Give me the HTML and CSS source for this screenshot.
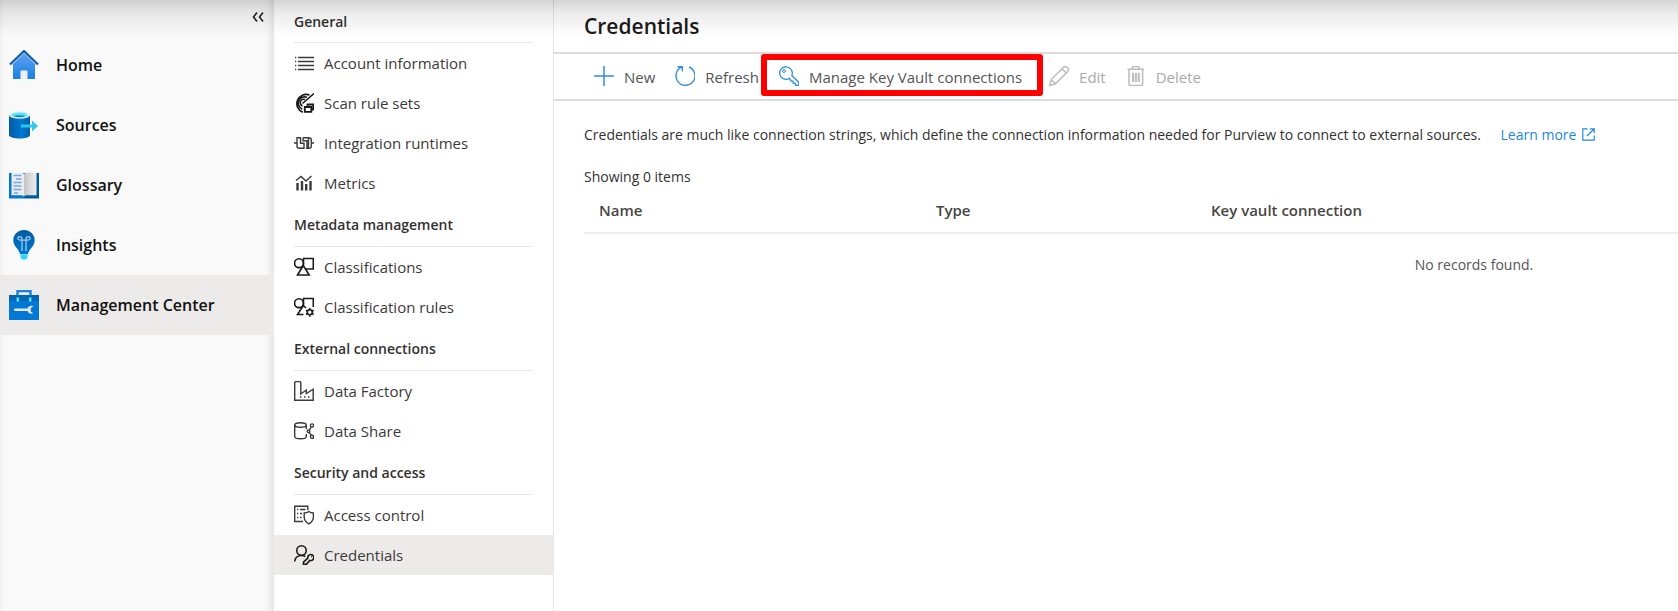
FILE: index.html
```html
<!DOCTYPE html>
<html lang="en">
<head>
    <meta charset="UTF-8">
    <meta name="viewport" content="width=device-width, initial-scale=1.0">
    <title>Credentials</title>
    <link rel="stylesheet" href="styles.css">
</head>
<body>
    <div class="app">
        <nav class="main-nav">
            <div class="collapse-row">
                <button class="collapse" type="button" aria-label="Collapse">
                    <svg width="14" height="12" viewBox="0 0 14 12" fill="none" stroke="#222" stroke-width="1.6"><path d="M6 1.500 2.500 6 6 10.500M12 1.500 8.500 6l3.500 4.500"/></svg>
                </button>
            </div>
            <a class="main-link" href="#">
                <svg class="main-icon" viewBox="0 0 30 30">
                    <defs><linearGradient id="blue" x1="0" y1="0" x2="0" y2="1"><stop offset="0" stop-color="#5ea0ef"/><stop offset="1" stop-color="#1a80e4"/></linearGradient></defs>
                    <path d="M4 14 15 3l11 11v15H4z" fill="url(#blue)"/>
                    <path d="M11.500 20.500h7V29h-7z" fill="#efefef"/>
                    <path d="M1 14.500 15 1l14 13.500" fill="none" stroke="#0a5ca8" stroke-width="2.200"/>
                </svg>
                Home
            </a>
            <a class="main-link" href="#">
                <svg class="main-icon" viewBox="0 0 30 30">
                    <defs><linearGradient id="drum" x1="0" y1="0" x2="1" y2="0"><stop offset="0" stop-color="#005ba1"/><stop offset=".6" stop-color="#0078d4"/><stop offset="1" stop-color="#005fa8"/></linearGradient></defs>
                    <path d="M0 5v20c0 2 5 3.500 10.500 3.500S21 27 21 25V5z" fill="url(#drum)"/>
                    <ellipse cx="10.500" cy="5" rx="10.500" ry="3.800" fill="#e4eef4"/>
                    <ellipse cx="10.500" cy="5" rx="8" ry="2.500" fill="#50e6ff"/>
                    <path d="M5 6.300c2-1.300 9-1.300 11 0-2 1.200-9 1.200-11 0z" fill="#198ab3"/>
                    <path d="M12 14.500h11v-4l6 5.500-6 5.500v-4H12z" fill="#32c8ec"/>
                </svg>
                Sources
            </a>
            <a class="main-link" href="#">
                <svg class="main-icon" viewBox="0 0 30 30">
                    <defs><linearGradient id="page" x1="0" y1="0" x2="1" y2="0"><stop offset="0" stop-color="#c4c4c4"/><stop offset="1" stop-color="#efefef"/></linearGradient></defs>
                    <path d="M0 3h15v25.500H0z" fill="#0078d4"/>
                    <path d="M15 3h15v25.500H15z" fill="#005ba1"/>
                    <path d="M2.500 2.500h9c2 0 3.500 1 3.500 2v22c-1-1-2-1.200-4-1.200H2.500z" fill="#ececec"/>
                    <path d="M27.500 2.500h-9c-2 0-3.500 1-3.500 2v22c1-1 2-1.200 4-1.200h8.500z" fill="url(#page)"/>
                    <path d="M4.500 5.500h8M7 9h5.500M4.500 12.500h8M4.500 16h8M4.500 19.500h8M5 23h4" stroke="#6fa8ee" stroke-width="1.500"/>
                </svg>
                Glossary
            </a>
            <a class="main-link" href="#">
                <svg class="main-icon" viewBox="0 0 30 30">
                    <defs><linearGradient id="bulb" x1="0" y1="0" x2="0" y2="1"><stop offset="0" stop-color="#005ba1"/><stop offset="1" stop-color="#0078d4"/></linearGradient></defs>
                    <path d="M15 0C9 0 4.300 4.500 4.300 10.200c0 6.300 5.700 8.300 6.700 14h8c1-5.700 6.700-7.700 6.700-14C25.700 4.500 21 0 15 0z" fill="url(#bulb)"/>
                    <path d="M11.500 24.500h7v3.200L17 29.500h-4l-1.500-1.800z" fill="#32d4f5"/>
                    <path d="M13 21V9.500C13 5.500 8.500 6 8.800 8.500c.2 1.700 2 1.700 4.200 1.700h4c2.200 0 4 0 4.200-1.700.3-2.500-4.200-3-4.200 1V21" fill="none" stroke="#9cc9ee" stroke-width="1.300"/>
                </svg>
                Insights
            </a>
            <a class="main-link active" href="#">
                <svg class="main-icon" viewBox="0 0 30 30">
                    <path d="M8.500 6V1h13v5" fill="none" stroke="#1683d8" stroke-width="2.400"/>
                    <path d="M0 5h30v25H0z" fill="#0078d4"/>
                    <path d="M0 5h30v6H0z" fill="#0067b8"/>
                    <path d="M7.500 7.500h2.500V11l-1.200 1L7.500 11zM20 7.500h2.500V11l-1.200 1L20 11z" fill="#50e6ff"/>
                    <path d="M6 18.500h12.500c.8-2.500 3.500-3.200 5.800-2.200L21.800 18v3.500l2.500 1.700c-2.300 1-5 .3-5.800-2.200H6c-1.600 0-1.600-2.500 0-2.500z" fill="#e3e7ea"/>
                </svg>
                Management Center
            </a>
        </nav>

        <nav class="sub-nav">
            <h2 class="group-title">General</h2>
            <a class="sub-link" href="#">
                <svg class="sub-icon" viewBox="0 0 20 20"><path d="M4 4.500h16M4 8.500h16M4 12.500h16M4 16.500h16M1 4.500h1.300M1 8.500h1.300M1 12.500h1.300M1 16.500h1.300"/></svg>
                Account information
            </a>
            <a class="sub-link" href="#">
                <svg class="sub-icon dark" viewBox="0 0 20 20"><path d="M15.500 2A9.200 9.200 0 1 0 8.800 19.300M13 4.300A6.300 6.300 0 1 0 8.300 16.200M11 6.500A3.400 3.400 0 1 0 8.500 13M8.500 10.500 20 .5"/><path d="M13.500 13.500v-2h5.800v5H17.500M10.800 14h6.500v4.800h-6.500z" stroke-width="1.800"/></svg>
                Scan rule sets
            </a>
            <a class="sub-link" href="#">
                <svg class="sub-icon" viewBox="0 0 20 20"><path d="M0 10h3M17 10h3M6 4.700H3V13c0 1.500 1 2.300 2.500 2.300H10v-5H6.500V4.700zM9 4.700h5.500V13c0 1.500-1 2.300-2.500 2.300M9 4.700v3h4v7.600h2c1.500 0 2.300-1 2.300-2.300V6.500c0-1-.8-1.800-2.800-1.800"/></svg>
                Integration runtimes
            </a>
            <a class="sub-link" href="#">
                <svg class="sub-icon" viewBox="0 0 20 20"><path d="M3.500 10v7.500M8 8v9.500M12.200 11v6.500M16.500 8v9.500" stroke-width="2.400"/><path d="M2 7.500 7 3.500l5 4.500L17.500 3"/></svg>
                Metrics
            </a>

            <h2 class="group-title">Metadata management</h2>
            <a class="sub-link" href="#">
                <svg class="sub-icon dark" viewBox="0 0 20 20"><path d="M9.500 8V1.500H19.300V12H12"/><circle cx="5" cy="6.200" r="4.400"/><path d="M9.300 8.500 3.500 18h11.700z"/></svg>
                Classifications
            </a>
            <a class="sub-link" href="#">
                <svg class="sub-icon dark" viewBox="0 0 20 20"><path d="M9.500 8V1.500H19.300V10"/><circle cx="5" cy="6.200" r="4.400"/><path d="M12 11 9.300 8.500 3.500 17.500h6"/><circle cx="15.800" cy="15.300" r="2.500" stroke-width="1.600"/><path d="M15.800 11v1.500M15.800 18.300v1.500M12 13.200l1.300.8M18.300 16.700l1.400.8M12 17.500l1.300-.8M18.300 14l1.400-.8" stroke-width="1.600"/></svg>
                Classification rules
            </a>

            <h2 class="group-title">External connections</h2>
            <a class="sub-link" href="#">
                <svg class="sub-icon" viewBox="0 0 20 20"><path d="M.7 19.300V2C.7 1 1.200.6 2 .6h3.500c.8 0 1.300.5 1.300 1.400v11l5.500-4v3.500l6.900-4.300v11.100z"/><path d="M6 16h1.500M10 16h1.500M14 16h1.500" stroke-width="1.600"/></svg>
                Data Factory
            </a>
            <a class="sub-link" href="#">
                <svg class="sub-icon" viewBox="0 0 20 20"><path d="M.7 4v11.500c0 1.300 2.600 2.300 5.800 2.300s5.800-1 5.800-2.300V13M12.300 4v4"/><ellipse cx="6.500" cy="4" rx="5.800" ry="2.300"/><circle cx="18" cy="4.500" r="1.600"/><circle cx="14.500" cy="10.300" r="1.300"/><circle cx="18" cy="15.800" r="1.600"/><path d="m15.300 9.200 2-3.200M15.300 11.500l2 2.800"/></svg>
                Data Share
            </a>

            <h2 class="group-title">Security and access</h2>
            <a class="sub-link" href="#">
                <svg class="sub-icon" viewBox="0 0 20 20"><path d="M9 16.500H.7V1.300h13.100V5"/><path d="M3 4.500h1.300M6 4.500h5.500M3 8.500h1.300M6 8.500h2M3 12.500h1.300M6 12.500h1.500"/><path d="M14.800 6.500c1.300 1 2.700 1.400 4.600 1.500V12c0 3.500-2 5.500-4.600 6.800-2.600-1.300-4.600-3.300-4.600-6.800V8c1.900-.1 3.300-.5 4.600-1.500z"/></svg>
                Access control
            </a>
            <a class="sub-link active" href="#">
                <svg class="sub-icon dark" viewBox="0 0 20 20"><circle cx="7.500" cy="5.500" r="4.700"/><path d="M.7 16.500c.3-3.500 3-6 6.800-6 1.500 0 2.800.4 3.800 1"/><path d="M13.800 13.200a3 3 0 1 1 2 2.200l-3.500 4H9.500v-2.200z"/><path d="M17 11.500h.8"/></svg>
                Credentials
            </a>
        </nav>

        <main class="content">
            <h1 class="title">Credentials</h1>
            <div class="toolbar">
                <button class="tool" type="button">
                    <svg class="tool-icon" viewBox="0 0 20 20"><path d="M10 0v20M0 10h20" stroke-width="1.500"/></svg>
                    <span>New</span>
                </button>
                <button class="tool" type="button">
                    <svg class="tool-icon" viewBox="0 0 20 20"><path d="M14 1A9.500 9.500 0 1 1 6.500 1.200M2.500.7h4.800v4.800" stroke-width="1.400"/></svg>
                    <span>Refresh</span>
                </button>
                <button class="tool highlighted" type="button">
                    <svg class="tool-icon" viewBox="0 0 20 20"><path d="M10.500 12.300A6.300 6.300 0 1 1 12.800 9.500l7 6.800v3.200h-3.300v-2.200h-2.300v-2.200H12z" stroke-width="1.300"/><circle cx="5" cy="5" r="1.400" stroke-width="1"/></svg>
                    <span>Manage Key Vault connections</span>
                </button>
                <button class="tool" type="button" disabled>
                    <svg class="tool-icon" viewBox="0 0 20 20"><path d="m.7 19.300 1.500-5.800L14.500 1.300c2.600-2.300 6.300 1.500 4.200 4.200L6.500 17.800zM2.200 13.500l4.300 4.300M13 2.800 17.200 7" stroke-width="1.400"/></svg>
                    <span>Edit</span>
                </button>
                <button class="tool" type="button" disabled>
                    <svg class="tool-icon" viewBox="0 0 20 20"><path d="M1.500 3.200h16.500M6.500 3V1.500c0-.6.400-.9 1-.9h4.500c.6 0 1 .3 1 .9V3M3 3.200v15c0 .8.500 1.200 1.200 1.200h11.200c.7 0 1.200-.4 1.200-1.200v-15" stroke-width="1.500"/><path d="M7 7v9M9.900 7v9M12.800 7v9" stroke-width="2"/></svg>
                    <span>Delete</span>
                </button>
            </div>
            <p class="description">
                Credentials are much like connection strings, which define the connection information needed for Purview to connect to external sources.
                <a class="learn-more" href="#">Learn more
                    <svg width="13" height="13" viewBox="0 0 13 13" fill="none" stroke="currentColor" stroke-width="1.200"><path d="M5.500.8H.8v11.400h11.400V7.500M8 .8h4.200V5M12 1 5 8"/></svg>
                </a>
            </p>
            <p class="count">Showing 0 items</p>
            <table class="grid">
                <colgroup>
                    <col class="col-name">
                    <col class="col-type">
                    <col>
                </colgroup>
                <thead>
                    <tr>
                        <th>Name</th>
                        <th>Type</th>
                        <th>Key vault connection</th>
                    </tr>
                </thead>
                <tbody>
                    <tr>
                        <td class="empty" colspan="3">No records found.</td>
                    </tr>
                </tbody>
            </table>
        </main>
    </div>
</body>
</html>
```

FILE: styles.css
```css
* {
    box-sizing: border-box;
}
body {
    margin: 0;
    font-family: "Open Sans", "Noto Sans", sans-serif;
    font-size: 14px;
    color: #323130;
    background: #fff;
}
a {
    color: inherit;
    text-decoration: none;
}
button {
    font: inherit;
    color: inherit;
    background: none;
    border: 0;
    padding: 0;
}
.app {
    display: flex;
    min-height: 100vh;
    overflow: hidden;
}
/* shadow cast by the top bar */
.app::before {
    content: "";
    position: absolute;
    top: 0;
    left: 0;
    right: 0;
    height: 36px;
    background: linear-gradient(rgba(0,0,0,0.17), rgba(0,0,0,0.08) 35%, rgba(0,0,0,0));
    pointer-events: none;
}

.main-nav {
    flex: none;
    width: 274px;
    background: #f9f9f9;
    box-shadow: inset -9px 0 9px -7px rgba(0,0,0,0.12), inset 4px 0 5px -4px rgba(0,0,0,0.08);
}
.collapse-row {
    display: flex;
    justify-content: flex-end;
    height: 35px;
    padding: 11px 9px 0 0;
}
.collapse {
    height: 12px;
    line-height: 0;
}
.main-link {
    display: flex;
    align-items: center;
    gap: 17px;
    height: 60px;
    padding-left: 9px;
    font-size: 16px;
    font-weight: 600;
    color: #111;
}
.main-link.active {
    background: #edebe9;
}
.main-icon {
    width: 30px;
    height: 30px;
}

.sub-nav {
    flex: none;
    width: 280px;
    border-right: 1px solid #e6e6e6;
}
.group-title {
    height: 44px;
    margin: 0 20px;
    border-bottom: 1px solid #e8e8e8;
    font-size: 14px;
    font-weight: 600;
    line-height: 43px;
}
.group-title:first-child {
    height: 43px;
}
.sub-link {
    display: flex;
    align-items: center;
    gap: 10px;
    height: 40px;
    padding-left: 20px;
    font-size: 15px;
    color: #3b3a39;
}
.sub-link.active {
    background: #edebe9;
}
.sub-icon {
    width: 20px;
    height: 20px;
    fill: none;
    stroke: #3b3a39;
    stroke-width: 1.4;
}
.sub-icon.dark {
    stroke: #1b1a19;
    stroke-width: 1.6;
}

.content {
    flex: 1;
    min-width: 0;
}
.title {
    height: 52px;
    margin: 0;
    padding-left: 30px;
    font-size: 21px;
    font-weight: 600;
    line-height: 53px;
    color: #1b1a19;
}
.toolbar {
    display: flex;
    gap: 20px;
    height: 49px;
    padding: 12px 0 0 40px;
    border-top: 2px solid #dcdcdc;
    border-bottom: 2px solid #dcdcdc;
}
.tool {
    position: relative;
    display: flex;
    gap: 10px;
    height: 22px;
    font-size: 15px;
    line-height: 23px;
    color: #555;
    white-space: nowrap;
}
.tool:disabled {
    color: #aaa;
}
.tool-icon {
    width: 20px;
    height: 20px;
    fill: none;
    stroke: #2e8fe0;
}
.tool:disabled .tool-icon {
    stroke: #bbb;
}
.highlighted {
    padding-right: 7px;
}
.highlighted::after {
    content: "";
    position: absolute;
    inset: -12px -14px -8px -18px;
    border: 6px solid #f00;
    border-radius: 3px;
}
.description {
    margin: 0;
    padding: 24px 0 0 30px;
    line-height: 20px;
    white-space: nowrap;
}
.learn-more {
    margin-left: 16px;
    color: #2189dc;
}
.learn-more svg {
    margin-left: 2px;
    vertical-align: -1px;
}
.count {
    margin: 0;
    padding: 22px 0 0 30px;
    line-height: 20px;
}
/* wider than the panel, the overflow is clipped by .app */
.grid {
    width: 1780px;
    margin-left: 30px;
    border-collapse: collapse;
    table-layout: fixed;
}
.col-name {
    width: 337px;
}
.col-type {
    width: 275px;
}
.grid th {
    height: 46px;
    padding: 0 15px;
    border-bottom: 2px solid #eee;
    font-size: 15px;
    font-weight: 600;
    color: #484644;
    text-align: left;
}
.grid .empty {
    height: 62px;
    padding: 0;
    color: #555;
    text-align: center;
}
```
